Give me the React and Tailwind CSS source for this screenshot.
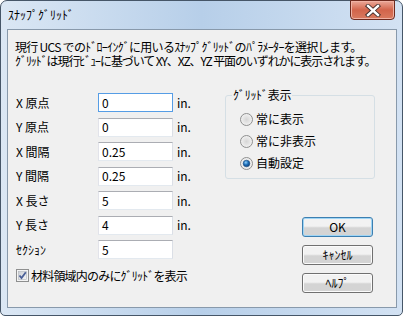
import React from 'react';

const font = { fontFamily: '"Noto Sans CJK JP", "Noto Sans", sans-serif' };

// 入力欄の行
const FieldRow = ({ label, value, unit, focused }) => (
  <div className="flex h-[19px] items-center">
    <span className="w-[82px] text-[12px] leading-[14px] text-black">{label}</span>
    <div
      className={
        'flex h-[19px] w-[75px] items-center border bg-white pl-[3px] text-[12px] leading-[14px] text-black ' +
        (focused ? 'border-[#569de5]' : 'border-[#abadb3] border-b-[#e3e9ef] border-l-[#e2e3ea] border-r-[#dbdfe6]')
      }
    >
      {value}
    </div>
    {unit && <span className="ml-[4px] text-[12px] leading-[14px] text-black">{unit}</span>}
  </div>
);

const Radio = ({ label, checked }) => (
  <div className="flex h-[14px] items-center">
    <svg width="13" height="13" viewBox="0 0 13 13">
      <defs>
        <radialGradient id={'rg' + label} cx="0.5" cy="0.5" r="0.6">
          <stop offset="0" stopColor="#d6d6d6" />
          <stop offset="1" stopColor="#f7f7f7" />
        </radialGradient>
        <radialGradient id={'dot' + label} cx="0.4" cy="0.35" r="0.7">
          <stop offset="0" stopColor="#8fd0fb" />
          <stop offset="0.5" stopColor="#1d6eb8" />
          <stop offset="1" stopColor="#0e3f7a" />
        </radialGradient>
      </defs>
      <circle cx="6.5" cy="6.5" r="6" fill={`url(#rg${label})`} stroke="#8e8f8f" strokeWidth="1" />
      {checked && <circle cx="6.5" cy="6.5" r="3.3" fill={`url(#dot${label})`} stroke="#1b4f83" strokeWidth="0.6" />}
    </svg>
    <span className="ml-[3px] text-[12px] leading-[14px] text-black">{label}</span>
  </div>
);

const Button = ({ children, focused }) => (
  <div
    className={
      'flex h-[20px] w-[71px] items-center justify-center rounded-[3px] border bg-gradient-to-b from-[#f2f2f2] from-45% to-[#d4d4d4] to-55% text-[12px] leading-[14px] text-black ' +
      (focused ? 'border-[#3c7fb1] shadow-[inset_0_0_0_1px_#9fd5f5]' : 'border-[#707070] shadow-[inset_0_0_0_1px_#fbfbfb]')
    }
  >
    {children}
  </div>
);

export default function App() {
  return (
    <div className="h-[316px] w-[403px] bg-white" style={font}>
      <div className="flex h-[316px] w-[403px] flex-col rounded-t-[7px] rounded-b-[5px] border border-[#465668] bg-gradient-to-r from-[#dbe7f4] via-[#b7cfe9] to-[#d3e2f3] pl-[6px] pr-[5px] pb-[7px] relative">
        {/* barre de titre */}
        <div className="flex h-[28px] items-center pl-[1px]">
          <span className="text-[12px] leading-[14px] text-black">ｽﾅｯﾌﾟｸﾞﾘｯﾄﾞ</span>
        </div>
        <div className="absolute right-[7px] top-[-1px] flex h-[20px] w-[45px] items-center justify-center rounded-b-[4px] border border-[#6e2a1e] bg-gradient-to-b from-[#eaa899] from-0% via-[#d2644b] via-50% to-[#d97a5f] shadow-[inset_0_0_0_1px_#f0b2a4]">
          <svg width="16" height="13" viewBox="0 0 16 13">
            <path d="M3 2 L13 11 M13 2 L3 11" stroke="#3c2a28" strokeWidth="4.2" strokeLinecap="square" />
            <path d="M3 2 L13 11 M13 2 L3 11" stroke="#ffffff" strokeWidth="2.4" strokeLinecap="square" />
          </svg>
        </div>

        {/* zone client */}
        <div className="flex flex-1 flex-col border border-[#8899ab] bg-[#f0f0f0] pl-[7px]">
          <div className="pt-[10px] text-[12px] leading-[14px] text-black">
            <div className="tracking-[-0.7px]">現行 UCS でのﾄﾞﾛｰｲﾝｸﾞに用いるｽﾅｯﾌﾟｸﾞﾘｯﾄﾞのﾊﾟﾗﾒｰﾀｰを選択します。</div>
            <div className="tracking-[-1.1px]">ｸﾞﾘｯﾄﾞは現行ﾋﾞｭｰに基づいて XY、XZ、YZ 平面のいずれかに表示されます。</div>
          </div>

          <div className="mt-[25px] flex">
            <div className="flex w-[210px] flex-col pl-[1px]">
              <div className="flex flex-col gap-[5.5px]">
                <FieldRow label="X 原点" value="0" unit="in." focused />
                <FieldRow label="Y 原点" value="0" unit="in." />
                <FieldRow label="X 間隔" value="0.25" unit="in." />
                <FieldRow label="Y 間隔" value="0.25" unit="in." />
                <FieldRow label="X 長さ" value="5" unit="in." />
                <FieldRow label="Y 長さ" value="4" unit="in." />
                <FieldRow label="ｾｸｼｮﾝ" value="5" />
              </div>
              <div className="mt-[10px] flex h-[13px] items-center">
                <svg width="13" height="13" viewBox="0 0 13 13">
                  <defs>
                    <linearGradient id="cb" x1="0" y1="0" x2="1" y2="1">
                      <stop offset="0" stopColor="#cbcfd5" />
                      <stop offset="1" stopColor="#f6f6f6" />
                    </linearGradient>
                  </defs>
                  <rect x="0.5" y="0.5" width="12" height="12" fill="#f4f4f4" stroke="#8e8f8f" />
                  <rect x="2.5" y="2.5" width="8" height="8" fill="url(#cb)" stroke="#b0b4bb" strokeWidth="0.6" />
                  <path d="M3.5 6.5 L5.5 9 L9.8 3.2" fill="none" stroke="#4a5f97" strokeWidth="1.8" />
                </svg>
                <span className="ml-[2px] text-[12px] leading-[14px] tracking-[-0.8px] text-black">材料領域内のみにｸﾞﾘｯﾄﾞを表示</span>
              </div>
            </div>

            <div className="flex w-[150px] flex-col">
              <div className="relative mt-[2px] h-[84px] rounded-[3px] border border-[#d5dfe5] pl-[14px] pt-[16px]">
                <span className="absolute left-[6px] top-[-8px] bg-[#f0f0f0] px-[1px] text-[12px] leading-[14px] tracking-[-0.3px] text-black">
                  ｸﾞﾘｯﾄﾞ表示
                </span>
                <div className="flex flex-col gap-[8px]">
                  <Radio label="常に表示" />
                  <Radio label="常に非表示" />
                  <Radio label="自動設定" checked />
                </div>
              </div>
              <div className="ml-[77px] mt-[38px] flex flex-col gap-[8px]">
                <Button focused>OK</Button>
                <Button>ｷｬﾝｾﾙ</Button>
                <Button>ﾍﾙﾌﾟ</Button>
              </div>
            </div>
          </div>
        </div>
      </div>
    </div>
  );
}
